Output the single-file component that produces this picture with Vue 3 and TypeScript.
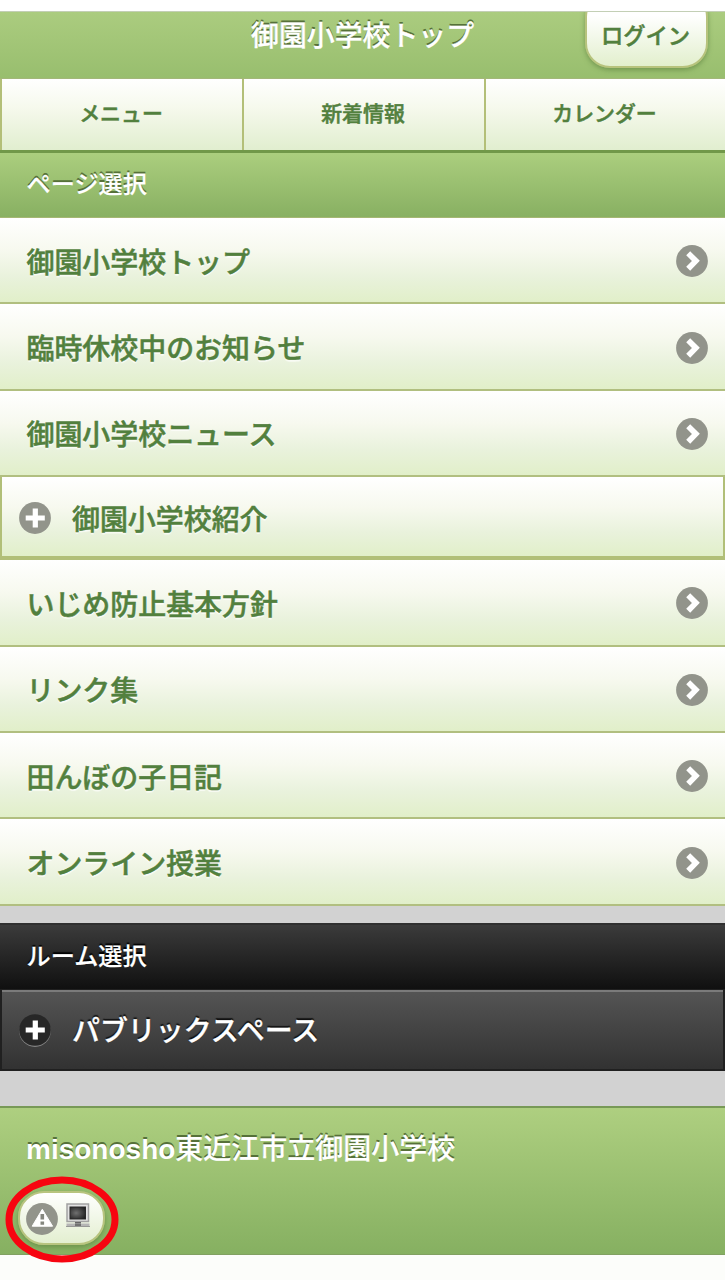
<script setup lang="ts">
interface PageItem {
  label: string
  collapsible?: boolean
}

const tabs: string[] = ['メニュー', '新着情報', 'カレンダー']

const pages: PageItem[] = [
  { label: '御園小学校トップ' },
  { label: '臨時休校中のお知らせ' },
  { label: '御園小学校ニュース' },
  { label: '御園小学校紹介', collapsible: true },
  { label: 'いじめ防止基本方針' },
  { label: 'リンク集' },
  { label: '田んぼの子日記' },
  { label: 'オンライン授業' },
]
</script>

<template>
  <div class="screen">
    <header class="header">
      <h1 class="title">御園小学校トップ</h1>
      <button class="login">ログイン</button>
    </header>

    <nav class="tabs">
      <a v-for="tab in tabs" :key="tab" class="tab">{{ tab }}</a>
    </nav>

    <h2 class="divider">ページ選択</h2>
    <ul class="list">
      <li v-for="page in pages" :key="page.label" :class="page.collapsible ? 'fold' : 'row'">
        <svg v-if="page.collapsible" class="icon" viewBox="0 0 32 32">
          <circle cx="16" cy="16" r="15.9" fill="#92948b" />
          <path d="M16.3 6.5v19M6.7 16h19.1" stroke="#fff" stroke-width="5.2" />
        </svg>
        <span class="label">{{ page.label }}</span>
        <svg v-if="!page.collapsible" class="icon" viewBox="0 0 32 32">
          <circle cx="16" cy="16" r="15.9" fill="#92948b" />
          <path d="M12.2 8.2l7.7 7.7-7.7 7.9" fill="none" stroke="#fff" stroke-width="5.6" />
        </svg>
      </li>
    </ul>

    <h2 class="divider dark">ルーム選択</h2>
    <div class="room">
      <svg class="icon" viewBox="0 0 32 34">
        <circle cx="16" cy="17.2" r="15.8" fill="#858585" />
        <circle cx="16" cy="16" r="15.8" fill="#272727" />
        <path d="M16.3 6.5v19M6.7 16h19.1" stroke="#fff" stroke-width="5.2" />
      </svg>
      <span class="label">パブリックスペース</span>
    </div>

    <footer class="footer">
      <div class="site"><span class="latin">misonosho</span>東近江市立御園小学校</div>
      <div class="switch">
        <svg class="icon" viewBox="0 0 32 32">
          <circle cx="16" cy="16" r="15.9" fill="#92948b" />
          <path d="M16.3 6.3L26.6 23.2H6.2z" fill="#fff" stroke="#fff" stroke-width="1" stroke-linejoin="round" />
          <path d="M16.3 11v5.4M16.3 18.5v3.2" stroke="#85877f" stroke-width="3.6" />
        </svg>
        <svg class="monitor" viewBox="0 0 24 24">
          <defs>
            <radialGradient id="glass" cx=".4" cy=".5" r=".7">
              <stop offset="0" stop-color="#707070" />
              <stop offset="1" stop-color="#1d1d1d" />
            </radialGradient>
          </defs>
          <rect x="1" y="1" width="21.5" height="17.5" fill="#e2e2e2" stroke="#a2a2a2" stroke-width="1.5" />
          <rect x="4" y="4" width="15.5" height="12" fill="url(#glass)" stroke="#292929" />
          <path d="M9 19h6v2H9z" fill="#666" />
          <rect x=".5" y="20.5" width="23" height="3" fill="#b5b5b5" />
          <path d="M9 22h6" stroke="#555" stroke-width="1.4" />
          <path d="M0 23.5h24" stroke="#888" stroke-width=".8" />
        </svg>
        <svg class="ring" viewBox="0 0 116 88">
          <ellipse cx="58" cy="43.5" rx="53" ry="39.5" fill="none" stroke="#f70510" stroke-width="7" />
        </svg>
      </div>
    </footer>
  </div>
</template>

<style>
body {
  margin: 0;
  background: #fcfdfa;
}
</style>

<style scoped>
.screen {
  box-sizing: border-box;
  width: 725px;
  height: 1280px;
  padding-top: 11px;
  overflow: hidden;
  background: linear-gradient(#fff 0 11px, #d2d2d2 11px 1200px, #fcfdfa 1200px);
  color: #52803e;
  font-family: "Noto Sans CJK JP", sans-serif;
  font-weight: 500;
  -webkit-text-stroke: 0.5px currentColor;
}
.header {
  display: grid;
  grid-template-columns: 1fr 223px 1fr;
  box-sizing: border-box;
  height: 68px;
  overflow: hidden;
  border-top: 1px solid #c3cfb5;
  border-bottom: 1px solid #a3b779;
  background: linear-gradient(#abcc7f, #98be6e);
}
.title {
  grid-column: 2;
  margin: 2px 0 0;
  color: #fff;
  font-size: 27.9px;
  font-weight: 500;
  line-height: 40px;
  white-space: nowrap;
  text-shadow: 0 -2px 0.5px #567139;
  -webkit-text-stroke-width: 0.3px;
}
.login {
  justify-self: end;
  box-sizing: border-box;
  width: 123px;
  height: 76px;
  margin: -20px 17px 0 0;
  padding: 7px 2px 0 0;
  border: 2px solid #b7c37d;
  border-radius: 25px;
  background: linear-gradient(#fff 30%, #e2efcd);
  box-shadow: 0 2px 5px #567c3b99;
  color: #52803e;
  font: 500 22.3px "Noto Sans CJK JP", sans-serif;
  -webkit-text-stroke: 0.5px currentColor;
}
.tabs {
  display: grid;
  grid-template-columns: 242px 242px 241px;
  height: 71px;
  background: linear-gradient(#fff, #f6f9ed 40%, #e1eecf);
}
.tab {
  box-sizing: border-box;
  padding-right: 2px;
  border-left: 2px solid #b3bf78;
  font-size: 20.9px;
  line-height: 67px;
  text-align: center;
}
.divider {
  box-sizing: border-box;
  height: 68px;
  margin: 0;
  padding-left: 26.5px;
  border-top: 3px solid #719849;
  border-bottom: 1px solid #a5b773;
  background: linear-gradient(#abce7e, #88b062);
  color: #fff;
  font-size: 24.2px;
  font-weight: 500;
  line-height: 60px;
  text-shadow: 0 -2px 0.5px #567139;
  -webkit-text-stroke-width: 0.2px;
}
.list {
  margin: 0;
  padding: 0;
  list-style: none;
}
.row,
.fold {
  display: flex;
  align-items: center;
  box-sizing: border-box;
  background: linear-gradient(#fff, #f7f9ef 38%, #e9f2dc 70%, #e1efc9);
  text-shadow: 0 2px 1px #ffffffb0;
}
.row {
  justify-content: space-between;
  height: 86.4px;
  padding: 2px 17.5px 0 26.5px;
  border-bottom: 2px solid #b1bf80;
}
.fold {
  gap: 21px;
  height: 83px;
  padding: 2px 19px 0 17px;
  border: solid #b1bf78;
  border-width: 0 2px 4px;
}
.label {
  font-size: 27.95px;
  line-height: 40px;
}
.row .label {
  margin-top: -1px;
}
.icon {
  display: block;
  flex: none;
  width: 32px;
  height: 32px;
}
.dark {
  height: 66px;
  margin-top: 17px;
  border-top: 2px solid #303030;
  border-bottom: 0;
  background: linear-gradient(#3b3b3b, #101010);
  line-height: 60px;
  text-shadow: 0 -2px 1px #000;
}
.room {
  display: flex;
  align-items: center;
  gap: 21px;
  box-sizing: border-box;
  height: 82px;
  padding: 0 17px;
  border: 2px solid #202020;
  border-top: 1px solid #202020;
  background: linear-gradient(#555, #323232);
  box-shadow: inset 0 2px #7b7b7b;
  color: #fff;
  text-shadow: 0 -2px 1px #111;
  -webkit-text-stroke-width: 0.3px;
}
.room .icon {
  height: 34px;
  margin-top: 3px;
}
.footer {
  box-sizing: border-box;
  height: 149px;
  margin-top: 35px;
  padding: 19px 0 0 18px;
  border-top: 2px solid #789957;
  border-bottom: 1px solid #81a061;
  background: linear-gradient(#aecf80, #86b061);
  box-shadow: 0 30px #fcfdfa;
}
.site {
  height: 40px;
  padding-left: 8px;
  color: #fff;
  font-size: 28px;
  line-height: 40px;
  text-shadow: 0 -2px 0.5px #567139;
  -webkit-text-stroke-width: 0.2px;
}
.latin {
  font-family: "Liberation Sans", sans-serif;
  font-weight: 700;
  -webkit-text-stroke-width: 0;
}
.switch {
  position: relative;
  display: flex;
  box-sizing: border-box;
  width: 87px;
  height: 54px;
  margin-top: 24px;
  padding: 10px 6px;
  gap: 8px;
  border: 2px solid #b8c47f;
  border-radius: 26px;
  background: linear-gradient(#fff, #e3efd0);
  box-shadow: 0 2px 5px #567c3b99;
}
.monitor {
  width: 24px;
  height: 24px;
}
.ring {
  position: absolute;
  top: -17px;
  left: -16px;
  width: 116px;
  height: 88px;
}
</style>
